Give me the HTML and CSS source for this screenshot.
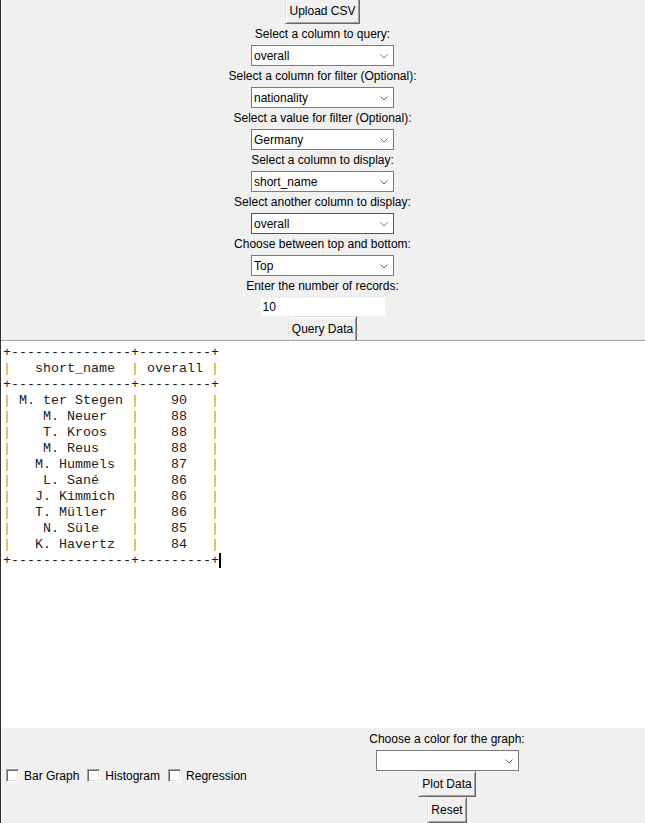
FILE: index.html
```html
<!DOCTYPE html>
<html>
<head>
<meta charset="utf-8">
<link rel="stylesheet" href="styles.css">
</head>
<body>
<div class="app">
  <div class="controls">
    <button class="btn btn-upload">Upload CSV</button>
    <div class="label">Select a column to query:</div>
    <div class="combo"><span>overall</span><svg class="chev" width="8" height="5" viewBox="0 0 8 5"><path d="M0.5 0.5 L4 4 L7.5 0.5" fill="none" stroke="#707070" stroke-width="1"/></svg></div>
    <div class="label">Select a column for filter (Optional):</div>
    <div class="combo"><span>nationality</span><svg class="chev" width="8" height="5" viewBox="0 0 8 5"><path d="M0.5 0.5 L4 4 L7.5 0.5" fill="none" stroke="#707070" stroke-width="1"/></svg></div>
    <div class="label">Select a value for filter (Optional):</div>
    <div class="combo"><span>Germany</span><svg class="chev" width="8" height="5" viewBox="0 0 8 5"><path d="M0.5 0.5 L4 4 L7.5 0.5" fill="none" stroke="#707070" stroke-width="1"/></svg></div>
    <div class="label">Select a column to display:</div>
    <div class="combo"><span>short_name</span><svg class="chev" width="8" height="5" viewBox="0 0 8 5"><path d="M0.5 0.5 L4 4 L7.5 0.5" fill="none" stroke="#707070" stroke-width="1"/></svg></div>
    <div class="label">Select another column to display:</div>
    <div class="combo combo-focus"><span>overall</span><svg class="chev" width="8" height="5" viewBox="0 0 8 5"><path d="M0.5 0.5 L4 4 L7.5 0.5" fill="none" stroke="#707070" stroke-width="1"/></svg></div>
    <div class="label">Choose between top and bottom:</div>
    <div class="combo"><span>Top</span><svg class="chev" width="8" height="5" viewBox="0 0 8 5"><path d="M0.5 0.5 L4 4 L7.5 0.5" fill="none" stroke="#707070" stroke-width="1"/></svg></div>
    <div class="label">Enter the number of records:</div>
    <div class="entry">10</div>
    <button class="btn">Query Data</button>
  </div>
  <div class="output"><pre class="table">+---------------+---------+
<span class="p">|</span>   short_name  <span class="p">|</span> overall <span class="p">|</span>
+---------------+---------+
<span class="p">|</span> M. ter Stegen <span class="p">|</span>    90   <span class="p">|</span>
<span class="p">|</span>    M. Neuer   <span class="p">|</span>    88   <span class="p">|</span>
<span class="p">|</span>    T. Kroos   <span class="p">|</span>    88   <span class="p">|</span>
<span class="p">|</span>    M. Reus    <span class="p">|</span>    88   <span class="p">|</span>
<span class="p">|</span>   M. Hummels  <span class="p">|</span>    87   <span class="p">|</span>
<span class="p">|</span>    L. Sané    <span class="p">|</span>    86   <span class="p">|</span>
<span class="p">|</span>   J. Kimmich  <span class="p">|</span>    86   <span class="p">|</span>
<span class="p">|</span>   T. Müller   <span class="p">|</span>    86   <span class="p">|</span>
<span class="p">|</span>    N. Süle    <span class="p">|</span>    85   <span class="p">|</span>
<span class="p">|</span>   K. Havertz  <span class="p">|</span>    84   <span class="p">|</span>
+---------------+---------+<span class="caret"></span></pre></div>
  <div class="bottom">
    <div class="checks">
      <label class="check"><span class="box"></span>Bar Graph</label>
      <label class="check"><span class="box"></span>Histogram</label>
      <label class="check"><span class="box"></span>Regression</label>
    </div>
    <div class="plot">
      <div class="label">Choose a color for the graph:</div>
      <div class="combo"><span></span><svg class="chev" width="8" height="5" viewBox="0 0 8 5"><path d="M0.5 0.5 L4 4 L7.5 0.5" fill="none" stroke="#707070" stroke-width="1"/></svg></div>
      <button class="btn">Plot Data</button>
      <button class="btn">Reset</button>
    </div>
  </div>
</div>
</body>
</html>
```

FILE: styles.css
```css
html, body {
  margin: 0;
  padding: 0;
}
body {
  width: 645px;
  height: 823px;
  overflow: hidden;
  background: #f0f0f0;
  font-family: "Liberation Sans", Arial, sans-serif;
  font-size: 12px;
  color: #000;
}
.app {
  height: 823px;
  border-left: 1px solid #333;
  display: flex;
  flex-direction: column;
  box-sizing: border-box;
}
.controls {
  display: flex;
  flex-direction: column;
  align-items: center;
  height: 341px;
  flex: none;
  box-sizing: border-box;
  border-bottom: 1px solid #a0a0a0;
  overflow: hidden;
  padding-right: 1px;
}
.btn {
  box-sizing: border-box;
  height: 26px;
  padding: 0 3px;
  margin: 0;
  font-family: inherit;
  font-size: 12px;
  color: #000;
  background: #f0f0f0;
  border: 1px solid;
  border-color: #e3e3e3 #696969 #696969 #e3e3e3;
  box-shadow: inset 1px 1px 0 #fff, inset -1px -1px 0 #a0a0a0;
  line-height: 22px;
  white-space: nowrap;
  flex: none;
}
.btn-upload {
  margin-top: -2px;
}
.label {
  height: 21px;
  line-height: 21px;
  white-space: nowrap;
  flex: none;
}
.combo {
  box-sizing: border-box;
  width: 143px;
  height: 21px;
  flex: none;
  background: #fff;
  border: 1px solid #7a7a7a;
  display: flex;
  align-items: center;
  justify-content: space-between;
  padding: 0 5px 0 2px;
}
.combo-focus {
  border-color: #555;
}
.chev {
  display: block;
  margin-top: 1px;
}
.entry {
  box-sizing: border-box;
  width: 124px;
  height: 18px;
  flex: none;
  margin-top: 1px;
  background: #fff;
  padding-left: 2px;
  line-height: 18px;
}
.output {
  flex: 1;
  background: #fff;
}
.table {
  margin: 0;
  padding: 4px 0 0 2px;
  font-family: "Liberation Mono", "Courier New", monospace;
  font-size: 13.33px;
  line-height: 16px;
  color: #222;
}
.p {
  color: #d08a3a;
}
.caret {
  display: inline-block;
  width: 2px;
  height: 15px;
  background: #000;
  vertical-align: -4px;
}
.bottom {
  height: 95px;
  flex: none;
  display: flex;
}
.checks {
  align-self: center;
  display: flex;
  padding-left: 5px;
  gap: 8px;
}
.check {
  display: flex;
  align-items: center;
  gap: 5px;
  height: 16px;
}
.box {
  box-sizing: border-box;
  width: 13px;
  height: 13px;
  background: #fff;
  border: 1px solid;
  border-color: #a0a0a0 #fff #fff #a0a0a0;
  box-shadow: inset 1px 1px 0 #696969, inset -1px -1px 0 #e3e3e3;
}
.plot {
  margin-left: auto;
  margin-right: 118px;
  width: 160px;
  display: flex;
  flex-direction: column;
  align-items: center;
  padding-top: 1px;
}
```
